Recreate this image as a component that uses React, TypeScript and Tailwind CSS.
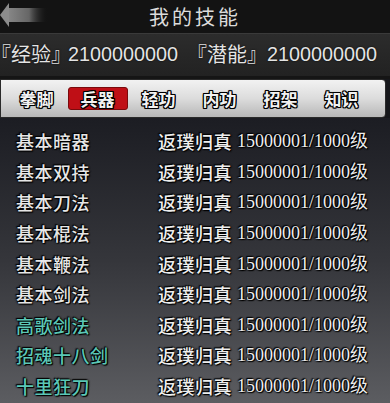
import React from "react";

const skills: { name: string; teal?: boolean }[] = [
  { name: "基本暗器" },
  { name: "基本双持" },
  { name: "基本刀法" },
  { name: "基本棍法" },
  { name: "基本鞭法" },
  { name: "基本剑法" },
  { name: "高歌剑法", teal: true },
  { name: "招魂十八剑", teal: true },
  { name: "十里狂刀", teal: true },
];

const tabs = ["拳脚", "兵器", "轻功", "内功", "招架", "知识"];

function Stat({ label, value, className, gap }: { label: string; value: string; className: string; gap: string }) {
  return (
    <span className={"flex items-center " + className}>
      <span className="text-[20px] [font-feature-settings:'halt']">『{label}』</span>
      <span className={gap + " text-[19.8px]"}>{value}</span>
    </span>
  );
}

export default function App() {
  return (
    <div className="w-[390px] h-[403px] overflow-hidden flex flex-col bg-[#16171b] font-['Noto_Sans_CJK_SC',sans-serif]">
      {/* header */}
      <div className="relative h-[33px] bg-[#131313] flex items-center justify-center shrink-0">
        <svg className="absolute left-0 top-[2px]" width="50" height="25" viewBox="0 0 50 25">
          <defs>
            <linearGradient id="shaft" x1="0" x2="1" y1="0" y2="0">
              <stop offset="0" stopColor="#8a8a8a" />
              <stop offset="0.55" stopColor="#666666" />
              <stop offset="1" stopColor="#131313" stopOpacity="0" />
            </linearGradient>
          </defs>
          <rect x="6" y="6" width="42" height="14" fill="url(#shaft)" />
          <polygon points="0,13 9,1 9,25" fill="#8c8c8c" />
        </svg>
        <span className="text-[20px] tracking-[3px] text-[#dcdcdc] leading-none">我的技能</span>
      </div>
      {/* stats */}
      <div className="h-[43px] shrink-0 border-t border-[#3a3a3a] bg-gradient-to-b from-[#2c2c2c] to-[#222222] flex items-center text-[#e4e4e4] whitespace-nowrap font-['Liberation_Sans','Noto_Sans_CJK_SC',sans-serif] [text-shadow:0_0_2px_#000]">
        <Stat label="经验" value="2100000000" className="ml-[1px] w-[196px]" gap="ml-[7px]" />
        <Stat label="潜能" value="2100000000" className="" gap="ml-[10px]" />
      </div>
      {/* tab bar */}
      <div className="h-[3px] shrink-0 bg-[#151515]" />
      <div className="h-[39px] w-[386px] shrink-0 rounded-r-[4px] border border-[#2a2a2a] bg-gradient-to-b from-[#f2f2f2] via-[#dcdcdc] to-[#b8b8b8] flex items-center pl-[5px]">
        {tabs.map((t, i) => (
          <div key={t} className="w-[61px] flex items-center justify-center">
            <div
              className={
                i === 1
                  ? "w-[60px] h-[23px] rounded-[3px] bg-[#bf0f16] border border-[#7a0a0c] flex items-center justify-center"
                  : "w-[60px] h-[23px] flex items-center justify-center"
              }
            >
              <span className="text-[17px] font-bold leading-none text-[#f2f2f2] [text-shadow:1px_0_0_#000,-1px_0_0_#000,0_1px_0_#000,0_-1px_0_#000,1px_1px_0_#000,-1px_-1px_0_#000,1px_-1px_0_#000,-1px_1px_0_#000,0_0_2px_#000]">
                {t}
              </span>
            </div>
          </div>
        ))}
      </div>
      {/* list */}
      <div className="flex-1 bg-gradient-to-b from-[#1c1d23] via-[#35363b] to-[#5c5d61] pt-[8px]">
        {skills.map((s, i) => (
          <div key={i} className="h-[30.6px] flex items-center whitespace-nowrap [text-shadow:0_0_2px_#000,0_0_2px_#000,1px_1px_1px_#000,-1px_-1px_1px_#000]">
            <span
              className={
                "ml-[16px] w-[142px] text-[18px] font-medium tracking-[0.5px] leading-none " +
                (s.teal ? "text-[#5cc7b6]" : "text-[#e6e6e6]")
              }
            >
              {s.name}
            </span>
            <span className="text-[18px] font-medium tracking-[0.5px] leading-none text-[#eeeeee]">返璞归真</span>
            <span className="ml-[5px] text-[18px] leading-none text-[#eeeeee] font-['Liberation_Serif','Noto_Sans_CJK_SC',serif]">
              15000001/1000级
            </span>
          </div>
        ))}
      </div>
    </div>
  );
}
